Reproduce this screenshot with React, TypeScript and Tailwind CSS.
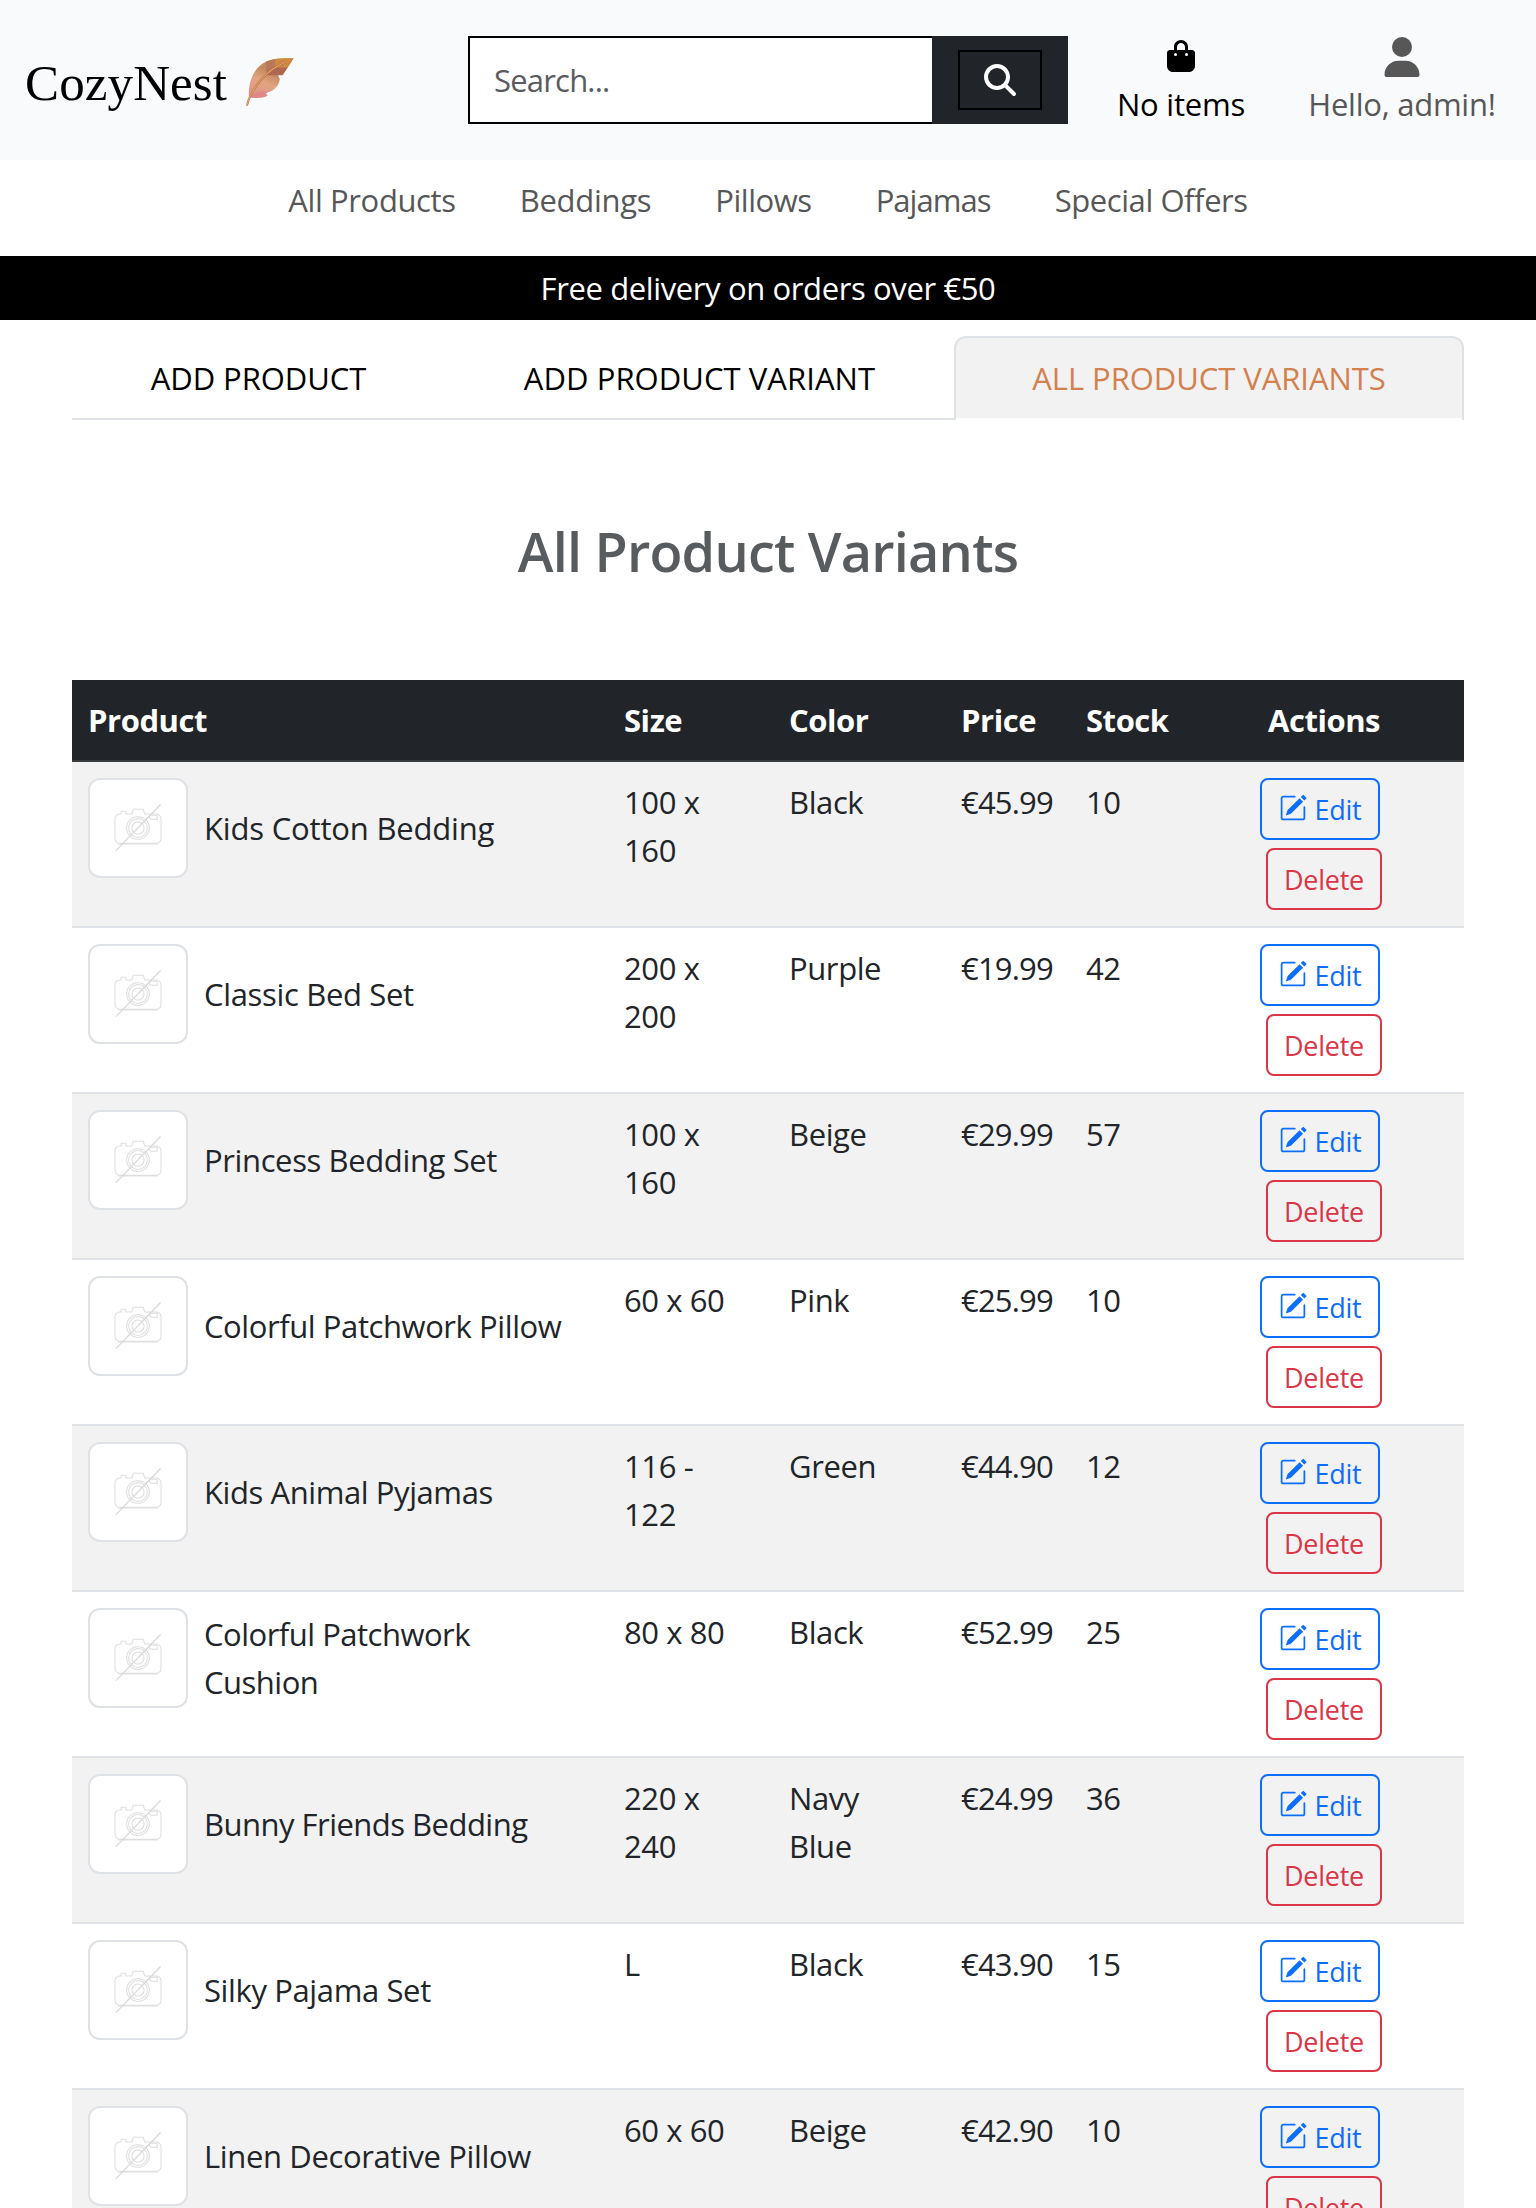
import React from "react";
import { FaBagShopping, FaMagnifyingGlass, FaUser } from "react-icons/fa6";
import { BsPencilSquare } from "react-icons/bs";

type Variant = {
  name: string[];
  nameClass: string;
  size: string[];
  color: string[];
  price: string;
  stock: number;
};

const variants: Variant[] = [
  { name: ["Kids Cotton Bedding"], nameClass: "tracking-[-0.18px]", size: ["100 x", "160"], color: ["Black"], price: "€45.99", stock: 10 },
  { name: ["Classic Bed Set"], nameClass: "tracking-[-0.33px]", size: ["200 x", "200"], color: ["Purple"], price: "€19.99", stock: 42 },
  { name: ["Princess Bedding Set"], nameClass: "tracking-[-0.38px]", size: ["100 x", "160"], color: ["Beige"], price: "€29.99", stock: 57 },
  { name: ["Colorful Patchwork Pillow"], nameClass: "tracking-[-0.42px]", size: ["60 x 60"], color: ["Pink"], price: "€25.99", stock: 10 },
  { name: ["Kids Animal Pyjamas"], nameClass: "tracking-[-0.42px]", size: ["116 -", "122"], color: ["Green"], price: "€44.90", stock: 12 },
  { name: ["Colorful Patchwork", "Cushion"], nameClass: "tracking-[-0.5px]", size: ["80 x 80"], color: ["Black"], price: "€52.99", stock: 25 },
  { name: ["Bunny Friends Bedding"], nameClass: "tracking-[-0.52px]", size: ["220 x", "240"], color: ["Navy", "Blue"], price: "€24.99", stock: 36 },
  { name: ["Silky Pajama Set"], nameClass: "tracking-[-0.38px]", size: ["L"], color: ["Black"], price: "€43.90", stock: 15 },
  { name: ["Linen Decorative Pillow"], nameClass: "tracking-[-0.37px]", size: ["60 x 60"], color: ["Beige"], price: "€42.90", stock: 10 },
];

const columns = "grid grid-cols-[536px_165px_172px_125px_114px_280px]";

function Feather() {
  return (
    <svg className="mt-[3px] size-12" viewBox="0 0 48 48" fill="none">
      <defs>
        <linearGradient id="vane" x1="34" y1="2" x2="14" y2="42" gradientUnits="userSpaceOnUse">
          <stop offset="0" stopColor="#c98444" />
          <stop offset="0.35" stopColor="#c58a63" />
          <stop offset="0.6" stopColor="#e2a480" />
          <stop offset="1" stopColor="#dd9488" />
        </linearGradient>
        <clipPath id="vaneShape">
          <path d="M3 39C2 27 6 13 16 6C24 0.5 34 0 47.7 0.3L44 6L36.5 17.3H32L33.8 21C33 28 28 33 21 34.5L20 35.6L21.5 37.8C16 40.5 9 40.6 3 39Z" />
        </clipPath>
      </defs>
      <g clipPath="url(#vaneShape)">
        <path fill="url(#vane)" d="M0 0H48V48H0Z" />
        <path fill="#b4735a" fillOpacity="0.75" d="M20 3L29 1V9L20 15Z" />
        <path fill="#a9624e" fillOpacity="0.85" d="M20 17.5L30 9.5H44V17.3H20Z" />
        <path fill="#d28a3d" fillOpacity="0.7" d="M29 0H48L43 9.3H29Z" />
        <path fill="#d9788a" fillOpacity="0.45" d="M5 37L14 33.5L28 33L18 41H3Z" />
      </g>
      <path stroke="#b06a3c" strokeWidth="1.9" strokeLinecap="round" d="M1.2 46.8C3 39 8 30 15 22C22 14 30 8 38.5 4.5" />
      <path stroke="#e9a56c" strokeWidth="1.1" strokeLinecap="round" d="M1.2 46.8C3 39 8 30 15 22C22 14 30 8 38.5 4.5" />
    </svg>
  );
}

function NoPhoto() {
  return (
    <svg className="size-[100px]" viewBox="0 0 100 100" fill="none" stroke="#dedede" strokeWidth="1.1">
      <path d="M31 35.5H32.5V32.5H37.5V35.5H43.5L45 30.5H55.5L57 35.5H69A5 5 0 0 1 74 40.5V61A5 5 0 0 1 69 66H31A5 5 0 0 1 26 61V40.5A5 5 0 0 1 31 35.5Z" />
      <path d="M29 67H71" strokeOpacity="0.6" />
      <circle cx="50" cy="50" r="11.8" />
      <circle cx="50" cy="50" r="9.8" />
      <circle cx="50" cy="50" r="6.3" />
      <path d="M62.5 36.8H70V40.8H63.5L61.5 38.5Z" />
      <path stroke="#d9d9d9" strokeWidth="1.3" d="M27 73.5L73.5 25.5" />
    </svg>
  );
}

function Lines({ text }: { text: string[] }) {
  return (
    <>
      {text.map((line) => (
        <span key={line} className="block whitespace-nowrap">
          {line}
        </span>
      ))}
    </>
  );
}

function Row({ item, striped }: { item: Variant; striped: boolean }) {
  return (
    <div
      className={`${columns} h-[166px] border-b-2 border-[#dee2e6] text-[#212529] ${striped ? "bg-[#f2f2f2]" : "bg-white"}`}
    >
      <div className="flex h-[132px] items-center gap-4 px-4">
        <div className="flex size-[100px] shrink-0 items-center justify-center rounded-xl border-2 border-[#dee2e6] bg-white">
          <NoPhoto />
        </div>
        <div className={item.nameClass}>
          <Lines text={item.name} />
        </div>
      </div>
      <div className="p-4 tracking-[-0.4px]">
        <Lines text={item.size} />
      </div>
      <div className="p-4 tracking-[-0.4px]">
        <Lines text={item.color} />
      </div>
      <div className="p-4 tracking-[-0.8px]">{item.price}</div>
      <div className="p-4 tracking-[-0.5px]">{item.stock}</div>
      <div className="flex flex-col items-center gap-2 py-4 text-[27px] leading-[42px] tracking-[-0.27px]">
        <button className="mr-2 flex h-[62px] w-[120px] items-center justify-center gap-2 rounded-lg border-2 border-[#0d6efd] pt-0.5 text-[#0d6efd]">
          <BsPencilSquare className="-mt-1 size-7" />
          Edit
        </button>
        <button className="h-[62px] w-[116px] rounded-lg border-2 border-[#dc3545] pt-0.5 text-[#dc3545]">Delete</button>
      </div>
    </div>
  );
}

export default function App() {
  return (
    <div className="h-[2208px] w-[1536px] overflow-hidden bg-white font-['Open_Sans',sans-serif] text-[31px] leading-[48px] tracking-[-0.38px] text-[#212529]">
      <header className="flex h-40 items-center bg-[#f8fafc]">
        <div className="flex w-[468px] items-center pl-[25px]">
          <span className="w-[221px] pt-1.5 font-['Liberation_Serif',serif] text-[51px] tracking-[0.12px] text-black">
            CozyNest
          </span>
          <Feather />
        </div>
        <div className="flex h-[88px] w-[600px]">
          <div className="flex w-[464px] items-center border-2 border-r-0 border-black bg-white pl-6 tracking-[-0.8px] text-[#595c5f]">
            Search...
          </div>
          <div className="flex w-[136px] items-center justify-center bg-[#212529]">
            <button className="flex h-[60px] w-[84px] items-center justify-center border-2 border-black text-white">
              <FaMagnifyingGlass className="size-8" />
            </button>
          </div>
        </div>
        <div className="ml-[49px] flex w-32 flex-col items-center tracking-[-0.2px] text-black">
          <FaBagShopping className="mt-2 size-8" />
          <span className="mt-2 whitespace-nowrap">No items</span>
        </div>
        <div className="ml-[61px] flex w-48 flex-col items-center tracking-[-0.25px] text-[#575757]">
          <FaUser className="mt-[5px] size-10" />
          <span className="mt-[3px] whitespace-nowrap">Hello, admin!</span>
        </div>
      </header>

      <nav className="flex h-24 justify-center gap-16 pt-4 text-[#575757]">
        <a>All Products</a>
        <a className="tracking-[-0.28px]">Beddings</a>
        <a className="tracking-[-0.45px]">Pillows</a>
        <a className="tracking-[-0.95px]">Pajamas</a>
        <a className="tracking-[-0.42px]">Special Offers</a>
      </nav>

      <div className="flex h-16 items-center justify-center bg-black text-white">Free delivery on orders over €50</div>

      <main className="px-[72px] pt-4">
        <div className="grid h-[84px] grid-cols-[373px_509px_510px] text-center tracking-[-0.06px] text-black">
          <div className="border-b-2 border-[#dee2e6] pt-[18px]">ADD PRODUCT</div>
          <div className="border-b-2 border-[#dee2e6] pt-[18px] tracking-[0.06px]">ADD PRODUCT VARIANT</div>
          <div className="rounded-t-xl border-2 border-b-0 border-[#dee2e6] bg-[linear-gradient(#f2f2f2_80px,#fff_80px)] pt-4 text-[#d3804f]">
            ALL PRODUCT VARIANTS
          </div>
        </div>

        <h1 className="mt-[98px] text-center text-[54px] leading-[67px] font-semibold tracking-[-0.78px] text-[#595c5f]">
          All Product Variants
        </h1>

        <div className="mt-[95px]">
          <div
            className={`${columns} h-[82px] border-b-2 border-[#373b3e] bg-[#212529] font-bold tracking-[-0.45px] text-white`}
          >
            <div className="p-4">Product</div>
            <div className="p-4">Size</div>
            <div className="p-4">Color</div>
            <div className="p-4">Price</div>
            <div className="p-4">Stock</div>
            <div className="p-4 text-center">Actions</div>
          </div>
          {variants.map((item, i) => (
            <Row key={item.name[0] + i} item={item} striped={i % 2 === 0} />
          ))}
        </div>
      </main>
    </div>
  );
}
